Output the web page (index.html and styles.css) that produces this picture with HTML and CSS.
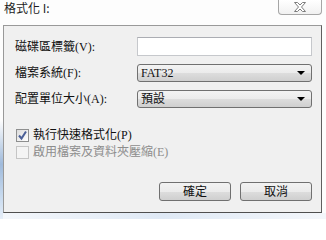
FILE: index.html
```html
<!DOCTYPE html>
<html lang="zh-Hant">
<head>
<meta charset="utf-8">
<title>格式化 I:</title>
<link rel="stylesheet" href="styles.css">
</head>
<body>
<div class="window">
  <div class="titlebar">
    <span class="title">格式化 I:</span>
    <div class="close">
      <svg width="14" height="10" viewBox="0 0 14 10">
        <path d="M1.5 0.5 H4.5 L7 3 L9.5 0.5 H12.5 L8.5 5 L12.5 9.5 H9.5 L7 7 L4.5 9.5 H1.5 L5.5 5 Z" fill="#ffffff" stroke="#7d7d7d" stroke-width="1" stroke-linejoin="round"/>
      </svg>
    </div>
  </div>
  <div class="client">
    <div class="form">
      <span class="label">磁碟區標籤(V):</span>
      <div class="textbox"></div>
      <span class="label">檔案系統(F):</span>
      <div class="select"><span>FAT32</span><span class="arrow"></span></div>
      <span class="label">配置單位大小(A):</span>
      <div class="select"><span>預設</span><span class="arrow"></span></div>
    </div>
    <div class="checks">
      <div class="check"><span class="box checked">
        <svg width="11" height="11" viewBox="0 0 11 11"><path d="M2 5.5 L4.5 8.5 L9 1.5" fill="none" stroke="#4a5f97" stroke-width="2"/></svg>
      </span><span>執行快速格式化(P)</span></div>
      <div class="check disabled"><span class="box"></span><span>啟用檔案及資料夾壓縮(E)</span></div>
    </div>
    <div class="buttons">
      <div class="btn">確定</div>
      <div class="btn">取消</div>
    </div>
  </div>
</div>
</body>
</html>
```

FILE: styles.css
```css
html, body {
  margin: 0;
  padding: 0;
  background: #ffffff;
}

body {
  font-family: "Noto Sans CJK TC", "Liberation Sans", sans-serif;
  font-size: 12px;
  color: #000;
}

.window {
  width: 326px;
  height: 219px;
  box-sizing: border-box;
  background:
    linear-gradient(to bottom, rgba(255,255,255,0) 55%, #9fbadb 75%, #c9dbef 90%, #e6eef8) left top / 3px 100% no-repeat,
    linear-gradient(to right, #f4f7fb, #dfe9f5, #f4f7fb) left bottom / 100% 6px no-repeat,
    #fdfdfd;
  display: flex;
  flex-direction: column;
}

.titlebar {
  height: 25px;
  display: flex;
  justify-content: space-between;
  align-items: flex-start;
}

.title {
  padding-left: 4px;
  padding-top: 1px;
  line-height: 14px;
  font-size: 12px;
  color: #1e1e1e;
}

.close {
  width: 44px;
  height: 15px;
  margin-right: 4px;
  box-sizing: border-box;
  border: 1px solid #a6a6a6;
  border-top: none;
  border-radius: 0 0 4px 4px;
  background: linear-gradient(#ffffff, #f1f1f1);
  display: flex;
  align-items: center;
  justify-content: center;
}

.client {
  margin-left: 3px;
  width: 319px;
  height: 188px;
  box-sizing: border-box;
  border: 1px solid #999999;
  border-right-color: #5f5f5f;
  border-bottom-color: #4f4f4f;
  background: #f0f0f0;
  padding: 11px 9px 11px 11px;
  display: flex;
  flex-direction: column;
  font-family: "Liberation Serif", "Noto Sans CJK TC", serif;
  color: #111;
}

.form {
  display: grid;
  grid-template-columns: 122px 1fr;
  grid-template-rows: 19px 18px 18px;
  row-gap: 8px;
  align-items: center;
}

.label {
  line-height: 16px;
  white-space: nowrap;
}

.textbox {
  height: 19px;
  box-sizing: border-box;
  border: 1px solid #c6c8cc;
  border-top-color: #abadb3;
  background: #ffffff;
}

.select {
  height: 18px;
  box-sizing: border-box;
  border: 1px solid #707070;
  border-radius: 3px;
  background: linear-gradient(#f3f3f3 0%, #ebebeb 50%, #dddddd 51%, #cfcfcf 100%);
  display: flex;
  align-items: center;
  justify-content: space-between;
  padding: 0 6px 0 3px;
  line-height: 14px;
}

.arrow {
  width: 0;
  height: 0;
  border-left: 4px solid transparent;
  border-right: 4px solid transparent;
  border-top: 4px solid #000;
}

.checks {
  margin-top: 21px;
  display: flex;
  flex-direction: column;
  gap: 4px;
}

.check {
  display: flex;
  align-items: center;
  gap: 4px;
  padding-left: 1px;
  height: 13px;
  line-height: 13px;
}

.check.disabled {
  color: #8d8d8d;
}

.box {
  width: 13px;
  height: 13px;
  box-sizing: border-box;
  border: 1px solid #8e8f8f;
  background: linear-gradient(135deg, #dcdcdc, #ffffff);
  display: flex;
  align-items: center;
  justify-content: center;
}

.check.disabled .box {
  border-color: #c5c5c5;
  background: #f4f4f4;
}

.buttons {
  margin-top: auto;
  display: flex;
  justify-content: flex-end;
  gap: 9px;
}

.btn {
  width: 72px;
  height: 19px;
  box-sizing: border-box;
  border: 1px solid #707070;
  border-radius: 3px;
  background: linear-gradient(#f2f2f2 0%, #ebebeb 50%, #dddddd 51%, #cfcfcf 100%);
  display: flex;
  align-items: center;
  justify-content: center;
  line-height: 14px;
}
```
